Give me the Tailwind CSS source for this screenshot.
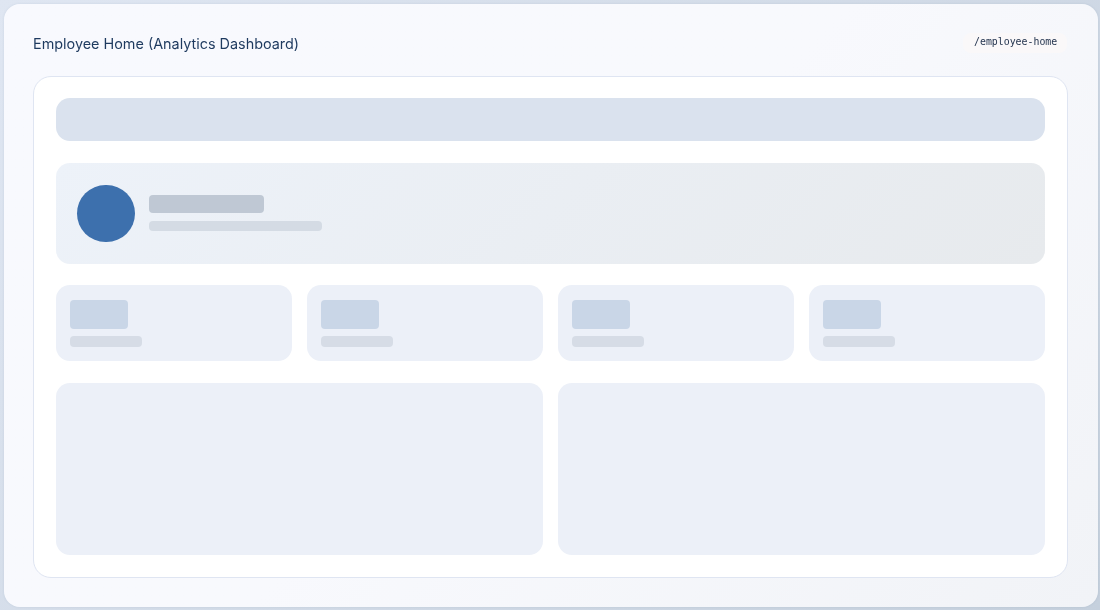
<!DOCTYPE html>
<html lang="en">
<head>
    <meta charset="UTF-8" />
    <meta name="viewport" content="width=device-width, initial-scale=1" />
    <title>Employee Home</title>
    <script src="https://cdn.jsdelivr.net/npm/@tailwindcss/browser@4"></script>
</head>
<body class="h-[610px] w-[1100px] overflow-hidden bg-linear-135 from-[#dfe6f2] to-[#c5d0dd] pt-[4px] pl-[4px]">
<div class="h-[603px] w-[1094px] rounded-[16px] bg-linear-135 from-[#f8f9fe] via-[#f8f9fd] to-[#f1f3f7] px-[29px] pt-[23px] shadow-[0_0_3px_rgba(30,58,95,0.08)] will-change-transform">
    <div class="flex h-[49px] items-start justify-between">
        <h1 class="mt-[6px] font-['Inter',sans-serif] text-[14.4px] leading-[22px] font-normal text-[#1e3a5f]">Employee Home (Analytics Dashboard)</h1>
        <span class="mt-[6px] mr-[2px] h-[20px] w-[104px] rounded-[8px] bg-[#faf8f9] pl-[11px] font-['DejaVu_Sans_Mono',monospace] text-[9.9px] leading-[18px] text-[#1e2f4a]">/employee-home</span>
    </div>
    <div class="h-[502px] w-[1035px] rounded-[18px] border border-[#dfe5f2] bg-white px-[22px] pt-[21px]">
        <div class="h-[43px] rounded-[14px] bg-[#dae2ee]"></div>
        <div class="mt-[22px] flex h-[101px] items-center gap-[14px] rounded-[14px] bg-linear-135 from-[#edf2f9] to-[#e7eaed] px-[21px]">
            <div class="h-[57px] w-[58px] rounded-full bg-[#3d70ad]"></div>
            <div class="mb-[1px] flex flex-col gap-[8px]">
                <div class="h-[18px] w-[115px] rounded-[4px] bg-[#bfc8d4]"></div>
                <div class="h-[10px] w-[173px] rounded-[4px] bg-[#d4dbe4]"></div>
            </div>
        </div>
        <div class="mt-[21px] grid grid-cols-4 gap-[15px]">
            <div class="h-[76px] rounded-[14px] bg-[#ecf0f8] p-[14px] pt-[15px]">
                <div class="h-[29px] w-[58px] rounded-[4px] bg-[#c9d6e7]"></div>
                <div class="mt-[7px] h-[11px] w-[72px] rounded-[4px] bg-[#d6dce6]"></div>
            </div>
            <div class="h-[76px] rounded-[14px] bg-[#ecf0f8] p-[14px] pt-[15px]">
                <div class="h-[29px] w-[58px] rounded-[4px] bg-[#c9d6e7]"></div>
                <div class="mt-[7px] h-[11px] w-[72px] rounded-[4px] bg-[#d6dce6]"></div>
            </div>
            <div class="h-[76px] rounded-[14px] bg-[#ecf0f8] p-[14px] pt-[15px]">
                <div class="h-[29px] w-[58px] rounded-[4px] bg-[#c9d6e7]"></div>
                <div class="mt-[7px] h-[11px] w-[72px] rounded-[4px] bg-[#d6dce6]"></div>
            </div>
            <div class="h-[76px] rounded-[14px] bg-[#ecf0f8] p-[14px] pt-[15px]">
                <div class="h-[29px] w-[58px] rounded-[4px] bg-[#c9d6e7]"></div>
                <div class="mt-[7px] h-[11px] w-[72px] rounded-[4px] bg-[#d6dce6]"></div>
            </div>
        </div>
        <div class="mt-[22px] grid grid-cols-2 gap-[15px]">
            <div class="h-[172px] rounded-[14px] bg-[#ecf0f8]"></div>
            <div class="h-[172px] rounded-[14px] bg-[#ecf0f8]"></div>
        </div>
    </div>
</div>
</body>
</html>
